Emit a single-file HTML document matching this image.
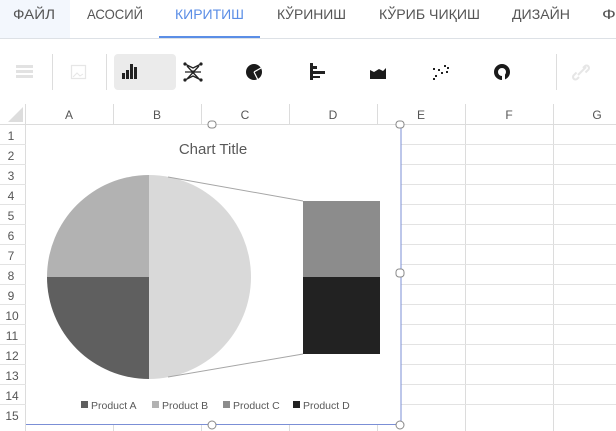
<!DOCTYPE html>
<html><head><style>
body{margin:0;width:616px;height:431px;overflow:hidden;background:#fff;font-family:"Liberation Sans",sans-serif;position:relative}
</style></head><body>
<svg width="616" height="431" style="position:absolute;left:0;top:0" font-family="Liberation Sans, sans-serif">
<rect x="0" y="0" width="70" height="38" fill="#f3f7fd"/>
<g font-size="14" fill="#555">
<text x="13" y="19" textLength="42" lengthAdjust="spacingAndGlyphs">ФАЙЛ</text>
<text x="87" y="19" textLength="56" lengthAdjust="spacingAndGlyphs">АСОСИЙ</text>
<text x="175" y="19" textLength="69" lengthAdjust="spacingAndGlyphs" fill="#5b8ee6">КИРИТИШ</text>
<text x="277" y="19" textLength="69" lengthAdjust="spacingAndGlyphs">КЎРИНИШ</text>
<text x="379" y="19" textLength="101" lengthAdjust="spacingAndGlyphs">КЎРИБ ЧИҚИШ</text>
<text x="512" y="19" textLength="58" lengthAdjust="spacingAndGlyphs">ДИЗАЙН</text>
<text x="602" y="19" textLength="28" lengthAdjust="spacingAndGlyphs">ФО</text>
</g>
<rect x="159" y="36" width="101" height="2" fill="#5b8ee6"/>
<rect x="0" y="38" width="616" height="1" fill="#dde1e6"/>
<!-- toolbar -->
<rect x="114" y="54" width="62" height="36" rx="4" fill="#ebebeb"/>
<line x1="52.5" y1="54" x2="52.5" y2="90" stroke="#ddd"/>
<line x1="106.5" y1="54" x2="106.5" y2="90" stroke="#ddd"/>
<line x1="556.5" y1="54" x2="556.5" y2="90" stroke="#ddd"/>
<g fill="#e2e2e2"><rect x="16" y="65" width="17" height="3"/><rect x="16" y="70" width="17" height="3"/><rect x="16" y="75" width="17" height="3"/></g>
<rect x="71.5" y="65.5" width="14" height="13" fill="none" stroke="#e6e6e6" stroke-width="1.2"/>
<path d="M73 77l4-4 3 3 3-2" stroke="#e6e6e6" fill="none"/>
<g fill="#222"><rect x="122" y="73" width="3" height="6"/><rect x="126" y="70" width="3" height="9"/><rect x="130" y="64" width="3" height="15"/><rect x="134" y="67" width="3" height="12"/></g>
<g stroke="#222" stroke-width="1.3" fill="none"><path d="M185 64l8 4 8-4M185 80l8-4 8 4M185 72h16M187 66l12 13M187 79l12-13"/></g>
<g fill="#222"><circle cx="185" cy="64" r="1.6"/><circle cx="201" cy="64" r="1.6"/><circle cx="185" cy="80" r="1.6"/><circle cx="201" cy="80" r="1.6"/><circle cx="193" cy="72" r="1.6"/></g>
<circle cx="254" cy="72" r="8" fill="#1a1a1a"/><path d="M254 72l4 8M254 72l7-4" stroke="#fff" stroke-width="1.2"/>
<g fill="#222"><rect x="310" y="63" width="3" height="17"/><rect x="310" y="66" width="7" height="3"/><rect x="310" y="71" width="15" height="3"/><rect x="310" y="76" width="10" height="2"/></g>
<path d="M370 79V70l4 2 5-3 4 2 3-3v11z" fill="#1a1a1a"/>
<g fill="#222"><rect x="433" y="68" width="2" height="2"/><rect x="438" y="69" width="2" height="2"/><rect x="444" y="65" width="2" height="2"/><rect x="447" y="67" width="2" height="2"/><rect x="441" y="72" width="2" height="2"/><rect x="446" y="71" width="2" height="2"/><rect x="435" y="75" width="2" height="2"/><rect x="433" y="78" width="2" height="2"/></g>
<circle cx="502" cy="72" r="6" fill="none" stroke="#1a1a1a" stroke-width="4"/><rect x="502" y="73" width="3" height="8" fill="#fff"/>
<g stroke="#e6e6e6" stroke-width="2" fill="none"><path d="M579 77l-2 2a2.5 2.5 0 01-3.5-3.5l3-3M583 68l2-2a2.5 2.5 0 013.5 3.5l-3 3M578 75l8-8"/></g>
<!-- grid -->
<g stroke="#dcdcdc" stroke-width="1">
<line x1="0" y1="124.5" x2="616" y2="124.5"/>
<line x1="25.5" y1="104" x2="25.5" y2="431"/>
<line x1="113.5" y1="104" x2="113.5" y2="125"/><line x1="201.5" y1="104" x2="201.5" y2="125"/><line x1="289.5" y1="104" x2="289.5" y2="125"/><line x1="377.5" y1="104" x2="377.5" y2="125"/>
<line x1="465.5" y1="104" x2="465.5" y2="431"/><line x1="553.5" y1="104" x2="553.5" y2="431"/>
<line x1="113.5" y1="425" x2="113.5" y2="431"/><line x1="201.5" y1="425" x2="201.5" y2="431"/><line x1="289.5" y1="425" x2="289.5" y2="431"/><line x1="377.5" y1="425" x2="377.5" y2="431"/>
</g>
<g stroke="#e3e3e3">
<line x1="0" y1="144.5" x2="616" y2="144.5"/><line x1="0" y1="164.5" x2="616" y2="164.5"/><line x1="0" y1="184.5" x2="616" y2="184.5"/><line x1="0" y1="204.5" x2="616" y2="204.5"/><line x1="0" y1="224.5" x2="616" y2="224.5"/><line x1="0" y1="244.5" x2="616" y2="244.5"/><line x1="0" y1="264.5" x2="616" y2="264.5"/><line x1="0" y1="284.5" x2="616" y2="284.5"/><line x1="0" y1="304.5" x2="616" y2="304.5"/><line x1="0" y1="324.5" x2="616" y2="324.5"/><line x1="0" y1="344.5" x2="616" y2="344.5"/><line x1="0" y1="364.5" x2="616" y2="364.5"/><line x1="0" y1="384.5" x2="616" y2="384.5"/><line x1="0" y1="404.5" x2="616" y2="404.5"/>
</g>
<path d="M23 107V122H8z" fill="#ddd"/>
<g font-size="12" fill="#555" text-anchor="middle">
<text x="69" y="119">A</text><text x="157" y="119">B</text><text x="245" y="119">C</text><text x="333" y="119">D</text><text x="421" y="119">E</text><text x="509" y="119">F</text><text x="597" y="119">G</text>
<text x="11" y="140">1</text><text x="11" y="160">2</text><text x="11" y="180">3</text><text x="11" y="200">4</text><text x="11" y="220">5</text><text x="11" y="240">6</text><text x="11" y="260">7</text><text x="11" y="280">8</text><text x="11" y="300">9</text><text x="12" y="320">10</text><text x="12" y="340">11</text><text x="12" y="360">12</text><text x="12" y="380">13</text><text x="12" y="400">14</text><text x="12" y="420">15</text>
</g>
<!-- chart -->
<rect x="26" y="125" width="375" height="299" fill="#fff"/>
<path d="M401 125V424.5H26" fill="none" stroke="#7b8fd6"/>
<text x="213" y="154" font-size="15" fill="#595959" text-anchor="middle">Chart Title</text>
<path d="M149 277V175A102 102 0 0 1 149 379z" fill="#d9d9d9"/>
<path d="M149 277V175A102 102 0 0 0 47 277z" fill="#b2b2b2"/>
<path d="M149 277H47A102 102 0 0 0 149 379z" fill="#5f5f5f"/>
<path d="M168 177L303 201M168 377L303 354" stroke="#a6a6a6" stroke-width="1"/>
<rect x="303" y="201" width="77" height="76" fill="#8c8c8c"/>
<rect x="303" y="277" width="77" height="77" fill="#222"/>
<g font-size="10.5" fill="#595959">
<rect x="81" y="401" width="7" height="7" fill="#5f5f5f"/><text x="91" y="409">Product A</text>
<rect x="152" y="401" width="7" height="7" fill="#b2b2b2"/><text x="162" y="409">Product B</text>
<rect x="223" y="401" width="7" height="7" fill="#8c8c8c"/><text x="233" y="409">Product C</text>
<rect x="293" y="401" width="7" height="7" fill="#222"/><text x="303" y="409">Product D</text>
</g>
<g fill="#fff" stroke="#888">
<rect x="208" y="421" width="8" height="8" rx="4"/><rect x="396" y="421" width="8" height="8" rx="4"/><rect x="396" y="269" width="8" height="8" rx="3"/>
<rect x="208" y="121" width="8" height="7" rx="3"/><rect x="396" y="121" width="8" height="7" rx="3"/>
</g>
</svg>
</body></html>
